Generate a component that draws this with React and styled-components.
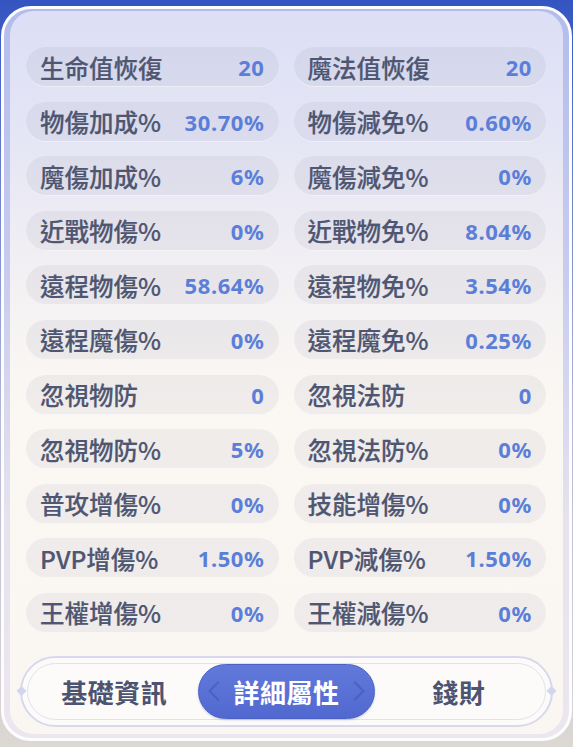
import React from 'react';
import styled, { createGlobalStyle } from 'styled-components';

const stats = [
  ['生命值恢復', '20', '魔法值恢復', '20'],
  ['物傷加成%', '30.70%', '物傷減免%', '0.60%'],
  ['魔傷加成%', '6%', '魔傷減免%', '0%'],
  ['近戰物傷%', '0%', '近戰物免%', '8.04%'],
  ['遠程物傷%', '58.64%', '遠程物免%', '3.54%'],
  ['遠程魔傷%', '0%', '遠程魔免%', '0.25%'],
  ['忽視物防', '0', '忽視法防', '0'],
  ['忽視物防%', '5%', '忽視法防%', '0%'],
  ['普攻增傷%', '0%', '技能增傷%', '0%'],
  ['PVP增傷%', '1.50%', 'PVP減傷%', '1.50%'],
  ['王權增傷%', '0%', '王權減傷%', '0%'],
];

const tabs = ['基礎資訊', '詳細屬性', '錢財'];

function App() {
  const cells = stats.flatMap(([a, av, b, bv]) => [
    [a, av],
    [b, bv],
  ]);

  return (
    <>
      <GlobalStyle />
      <Panel>
        <Inner>
          <StatGrid>
            {cells.map(([label, value], i) => (
              <StatRow key={i}>
                <Label>{label}</Label>
                <Value>{value}</Value>
              </StatRow>
            ))}
          </StatGrid>
          <TabBar>
            <TabTrack>
              {tabs.map((t, i) => (
                <Tab key={t} active={i === 1}>
                  {t}
                </Tab>
              ))}
            </TabTrack>
          </TabBar>
        </Inner>
      </Panel>
    </>
  );
}

export default App;

const GlobalStyle = createGlobalStyle`
  html, body {
    margin: 0;
    padding: 0;
  }
  body {
    background: linear-gradient(180deg, #3454c1 0px, #4562c6 60px, #b4b8d8 420px, #dcd8d2 747px);
    font-family: "Noto Sans CJK TC", "Noto Sans", sans-serif;
  }
  #root {
    width: 573px;
    height: 747px;
    overflow: hidden;
  }
`;

const Panel = styled.div`
  box-sizing: border-box;
  margin: 6px 1px 0 1px;
  height: 735px;
  border: 3px solid #fdfdff;
  border-radius: 30px;
  padding: 2px 6px 4px 6px;
  background: linear-gradient(180deg, #b3bdec 0%, #c6cbef 35%, #e6e2ee 70%, #ece7ee 100%);
`;

const Inner = styled.div`
  box-sizing: border-box;
  height: 100%;
  border-radius: 24px;
  padding: 36px 17px 8px 16px;
  display: flex;
  flex-direction: column;
  background: linear-gradient(
    180deg,
    #dcdff5 0%,
    #e5e6f5 18%,
    #f3f0f3 36%,
    #fbf8f3 55%,
    #faf7f2 100%
  );
`;

const StatGrid = styled.div`
  display: grid;
  grid-template-columns: 1fr 1fr;
  grid-auto-rows: 40px;
  column-gap: 15px;
  row-gap: 14.6px;
`;

const StatRow = styled.div`
  display: flex;
  align-items: center;
  justify-content: space-between;
  padding: 0 14px 0 14px;
  border-radius: 20px;
  background: rgba(100, 100, 130, 0.075);
  box-shadow: inset 0 -1px 0 rgba(255, 255, 255, 0.55);
`;

const Label = styled.span`
  font-size: 24.5px;
  font-weight: 500;
  color: #4e5671;
  white-space: nowrap;
  -webkit-text-stroke: 0.2px #4e5671;
`;

const Value = styled.span`
  font-family: "Noto Sans", sans-serif;
  font-size: 22px;
  font-weight: 700;
  letter-spacing: 0.6px;
  color: #5b7fd8;
`;

const TabBar = styled.div`
  position: relative;
  box-sizing: border-box;
  height: 71px;
  margin: 23px -7px 0 -6px;
  padding: 5px;
  border: 2px solid #d7d8ee;
  border-radius: 36px;
  background: #fcfbf9;

  &::before,
  &::after {
    content: '';
    position: absolute;
    top: 50%;
    width: 7px;
    height: 7px;
    background: #d3d5ee;
    transform: translateY(-50%) rotate(45deg);
  }
  &::before {
    left: -4px;
  }
  &::after {
    right: -4px;
  }
`;

const TabTrack = styled.div`
  box-sizing: border-box;
  height: 100%;
  display: grid;
  grid-template-columns: repeat(3, 1fr);
  align-items: center;
  border: 1.5px solid #e2e1f1;
  border-radius: 30px;
`;

const Tab = styled.div`
  position: relative;
  box-sizing: border-box;
  height: 55px;
  display: flex;
  align-items: center;
  justify-content: center;
  font-size: 26px;
  font-weight: 700;
  letter-spacing: 0.5px;
  color: ${(p) => (p.active ? '#ffffff' : '#4d5471')};
  margin: 0 ${(p) => (p.active ? '-2px' : '0')};
  border-radius: 28px;
  background: ${(p) =>
    p.active ? 'linear-gradient(180deg, #6279db 0%, #5168d0 100%)' : 'transparent'};
  border: ${(p) => (p.active ? '1.5px solid #4a61c5' : 'none')};
  box-shadow: ${(p) => (p.active ? '0 1px 2px rgba(60, 70, 150, 0.25)' : 'none')};

  &::before,
  &::after {
    content: '';
    display: ${(p) => (p.active ? 'block' : 'none')};
    position: absolute;
    top: 50%;
    width: 12px;
    height: 12px;
    border: 2px solid rgba(55, 75, 175, 0.45);
    border-width: 0 0 2px 2px;
    transform: translateY(-50%) rotate(45deg);
  }
  &::before {
    left: 12px;
  }
  &::after {
    right: 12px;
    transform: translateY(-50%) rotate(-135deg);
  }
`;
